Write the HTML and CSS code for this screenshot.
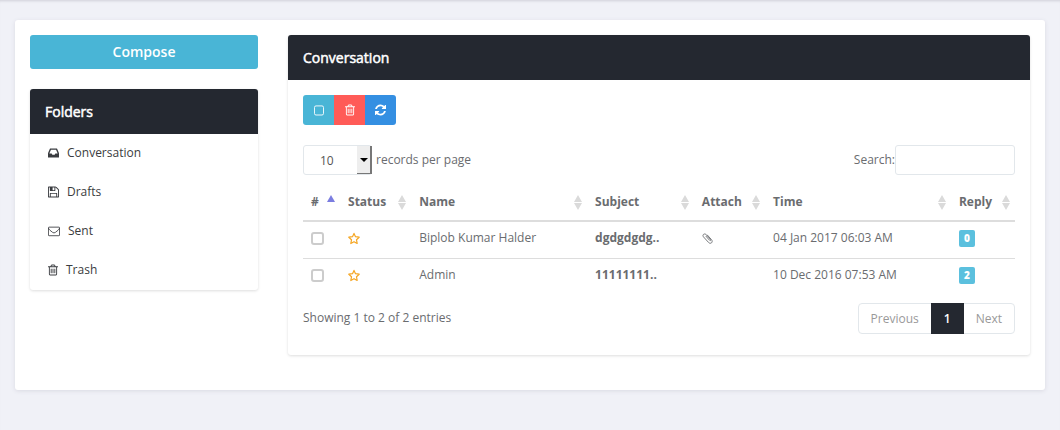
FILE: index.html
```
<!DOCTYPE html>
<html lang="en">
<head>
<meta charset="utf-8">
<meta name="viewport" content="width=device-width, initial-scale=1">
<title>Conversation</title>
<link rel="stylesheet" href="styles.css">
</head>
<body>
<svg class="sprite" aria-hidden="true">
  <symbol id="inbox" viewBox="0 0 1536 1792"><path d="M1023 960h316q-1-3-2.500-8t-2.500-8l-212-496H414L202 944q-1 2-2.500 8t-2.500 8h316l95 192h320zm513 30v482q0 26-19 45t-45 19H64q-26 0-45-19T0 1472V990q0-62 25-123l238-552q10-25 36.500-42t52.500-17h832q26 0 52.500 17t36.500 42l238 552q25 61 25 123z"/></symbol>
  <symbol id="floppy" viewBox="0 -128 1536 1792"><path d="M384 1408h768v-384H384v384zm896 0h128V512q0-14-10-38.500t-20-34.500l-281-281q-10-10-34-20t-39-10v416q0 40-28 68t-68 28H352q-40 0-68-28t-28-68V128H128v1280h128V992q0-40 28-68t68-28h832q40 0 68 28t28 68v416zM896 480V160q0-13-9.500-22.500T864 128H672q-13 0-22.500 9.500T640 160v320q0 13 9.500 22.500T672 512h192q13 0 22.500-9.500T896 480zm640 32v928q0 40-28 68t-68 28H96q-40 0-68-28t-28-68V96q0-40 28-68T96 0h928q40 0 88 20t76 48l280 280q28 28 48 76t20 88z"/></symbol>
  <symbol id="envelope" viewBox="0 0 1792 1792"><path fill="none" stroke="currentColor" stroke-width="128" d="M160 320h1472q96 0 96 96v1088q0 96-96 96H160q-96 0-96-96V416q0-96 96-96zM64 440q20 180 200 320l420 340q212 170 424 0l420-340q180-140 200-320"/></symbol>
  <symbol id="trash" viewBox="0 -128 1408 1792"><path d="M512 608v576q0 14-9 23t-23 9h-64q-14 0-23-9t-9-23V608q0-14 9-23t23-9h64q14 0 23 9t9 23zm256 0v576q0 14-9 23t-23 9h-64q-14 0-23-9t-9-23V608q0-14 9-23t23-9h64q14 0 23 9t9 23zm256 0v576q0 14-9 23t-23 9h-64q-14 0-23-9t-9-23V608q0-14 9-23t23-9h64q14 0 23 9t9 23zm128 724V384H256v948q0 22 7 40.500t14.500 27 10.500 8.500h832q3 0 10.500-8.500t14.500-27 7-40.500zM480 256h448l-48-117q-7-9-17-11H546q-10 2-17 11zm928 32v64q0 14-9 23t-23 9h-96v948q0 83-47 143.500t-113 60.500H288q-66 0-113-58.500T128 1336V384H32q-14 0-23-9t-9-23v-64q0-14 9-23t23-9h309l70-167q15-37 54-63t79-26h320q40 0 79 26t54 63l70 167h309q14 0 23 9t9 23z"/></symbol>
  <symbol id="square" viewBox="0 0 1408 1792"><rect x="64" y="320" width="1280" height="1280" rx="220" fill="none" stroke="currentColor" stroke-width="128"/></symbol>
  <symbol id="refresh" viewBox="0 -128 1536 1792"><path d="M1511 928q0 5-1 7-64 268-268 434.500T764 1536q-146 0-282.500-55T238 1324l-129 129q-19 19-45 19t-45-19-19-45V960q0-26 19-45t45-19h448q26 0 45 19t19 45-19 45l-137 137q71 66 161 102t187 36q134 0 250-65t186-179q11-17 53-117 8-23 30-23h192q13 0 22.500 9.500t9.500 22.500zm25-800v448q0 26-19 45t-45 19h-448q-26 0-45-19t-19-45 19-45l138-138Q969 256 768 256q-134 0-250 65T332 500q-11 17-53 117-8 23-30 23H50q-13 0-22.500-9.500T18 608v-7q65-268 270-434.500T768 0q146 0 284 55.500T1297 212l130-129q19-19 45-19t45 19 19 45z"/></symbol>
  <symbol id="star" viewBox="0 0 12 13"><path fill="none" stroke="currentColor" stroke-width="1.200" stroke-linejoin="round" d="M6 1.400 7.500 4.700 11.200 5.200 8.500 7.800 9.200 11.500 6 9.700 2.800 11.500 3.500 7.800 .8 5.200 4.500 4.700z"/></symbol>
  <symbol id="clip" viewBox="0 0 12 13"><path fill="none" stroke="currentColor" stroke-width=".9" stroke-linecap="round" d="M4 4.300 7.500 8.200C8.300 9.100 9.200 8.200 8.500 7.400L4.200 2.700C2.300.8-.2 3 1.600 5L6.500 10.400C8.700 12.700 11.500 10 9.500 7.700L5.300 3"/></symbol>
  <symbol id="sort" viewBox="0 0 8 15"><path d="M4 0 8 7H0zM0 8h8l-4 7z"/></symbol>
  <symbol id="asc" viewBox="0 0 8 15"><path d="M4 0 8 7H0z"/></symbol>
</svg>
<main class="page">
  <div class="card">
    <aside class="sidebar">
      <button class="compose" type="button">Compose</button>
      <nav class="panel" aria-labelledby="folders">
        <h2 class="panel-title" id="folders">Folders</h2>
        <ul class="folders">
          <li><a class="folder" href="#"><svg class="icon icon-12"><use href="#inbox"/></svg>Conversation</a></li>
          <li><a class="folder" href="#"><svg class="icon icon-12"><use href="#floppy"/></svg>Drafts</a></li>
          <li><a class="folder" href="#"><svg class="icon icon-13"><use href="#envelope"/></svg>Sent</a></li>
          <li><a class="folder" href="#"><svg class="icon icon-10"><use href="#trash"/></svg>Trash</a></li>
        </ul>
      </nav>
    </aside>
    <section class="panel content">
      <h2 class="panel-title">Conversation</h2>
      <div class="panel-body">
        <div class="tools">
          <button class="tool tool-check" type="button" aria-label="Select all"><svg class="icon icon-10"><use href="#square"/></svg></button>
          <button class="tool tool-delete" type="button" aria-label="Delete"><svg class="icon icon-10"><use href="#trash"/></svg></button>
          <button class="tool tool-refresh" type="button" aria-label="Refresh"><svg class="icon icon-12"><use href="#refresh"/></svg></button>
        </div>
        <div class="filters">
          <label class="length"><span class="select-box"><select class="select"><option>10</option><option>25</option><option>50</option></select><span class="select-arrow"></span></span>records per page</label>
          <label class="search">Search:<input class="search-input" type="text"></label>
        </div>
        <table class="table">
          <colgroup><col class="c-check"><col class="c-status"><col class="c-name"><col class="c-subject"><col class="c-attach"><col class="c-time"><col class="c-reply"></colgroup>
          <thead>
            <tr>
              <th><span class="head">#<svg class="sort sorted"><use href="#asc"/></svg></span></th>
              <th><span class="head">Status<svg class="sort"><use href="#sort"/></svg></span></th>
              <th><span class="head">Name<svg class="sort"><use href="#sort"/></svg></span></th>
              <th><span class="head">Subject<svg class="sort"><use href="#sort"/></svg></span></th>
              <th><span class="head">Attach<svg class="sort"><use href="#sort"/></svg></span></th>
              <th><span class="head">Time<svg class="sort"><use href="#sort"/></svg></span></th>
              <th><span class="head">Reply<svg class="sort"><use href="#sort"/></svg></span></th>
            </tr>
          </thead>
          <tbody>
            <tr>
              <td><input class="check" type="checkbox" aria-label="Select Biplob Kumar Halder"></td>
              <td><svg class="star"><use href="#star"/></svg></td>
              <td>Biplob Kumar Halder</td>
              <td><b>dgdgdgdg..</b></td>
              <td><svg class="clip"><use href="#clip"/></svg></td>
              <td>04 Jan 2017 06:03 AM</td>
              <td><span class="badge">0</span></td>
            </tr>
            <tr>
              <td><input class="check" type="checkbox" aria-label="Select Admin"></td>
              <td><svg class="star"><use href="#star"/></svg></td>
              <td>Admin</td>
              <td><b>11111111..</b></td>
              <td></td>
              <td>10 Dec 2016 07:53 AM</td>
              <td><span class="badge">2</span></td>
            </tr>
          </tbody>
        </table>
        <div class="footer">
          <span>Showing 1 to 2 of 2 entries</span>
          <nav class="pages" aria-label="Pages">
            <a class="page-link" href="#">Previous</a>
            <a class="page-link current" href="#">1</a>
            <a class="page-link" href="#">Next</a>
          </nav>
        </div>
      </div>
    </section>
  </div>
</main>
</body>
</html>
```
FILE: styles.css
```
* { box-sizing: border-box; }
body {
  margin: 0;
  background: #f0f1f7;
  color: #6a6c6f;
  font: 12px/18px "Open Sans", "Noto Sans", sans-serif;
}
button, input, select { font: inherit; color: inherit; }
.sprite { position: absolute; width: 0; height: 0; }
.icon, .star, .clip, .sort { display: block; flex: none; fill: currentColor; }
.icon { height: 14px; }
.icon-10 { width: 10px; }
.icon-12 { width: 11px; }
.icon-13 { width: 12px; }

.page { padding: 20px 15px 40px; box-shadow: inset 0 3px 3px -2px #cfd0d8; }
.card {
  display: flex;
  align-items: flex-start;
  gap: 30px;
  padding: 15px 15px 35px;
  border-radius: 3px;
  background: #fff;
  box-shadow: 0 1px 4px #d9dae2;
}
.sidebar { flex: 0 0 228px; }
.compose {
  display: block;
  width: 100%;
  height: 34px;
  margin: 0 0 20px;
  padding: 0;
  border: 0;
  border-radius: 3px;
  background: #49b5d6;
  color: #fff;
  font-size: 14px;
  font-weight: 600;
}
.panel { border-radius: 3px; background: #fff; box-shadow: 0 1px 3px #dedede; }
.panel-title {
  margin: 0;
  padding: 13px 15px 12px;
  border-radius: 3px 3px 0 0;
  background: #242830;
  color: #fff;
  font-size: 14px;
  line-height: 20px;
  font-weight: 400;
  -webkit-text-stroke: 0.5px #fff;
}
.folders { margin: 0; padding: 0; list-style: none; }
.folder {
  display: flex;
  align-items: center;
  gap: 8px;
  height: 39px;
  padding: 0 18px 2px;
  color: #3a3c40;
  text-decoration: none;
}
.content { flex: 1; min-width: 0; }
.panel-body { padding: 15px 15px 21px; }

.tools { display: flex; }
.tool {
  display: flex;
  align-items: center;
  justify-content: center;
  width: 31px;
  height: 30px;
  padding: 0;
  border: 0;
  color: #fff;
}
.tool-check { border-radius: 3px 0 0 3px; background: #49b5d6; }
.tool-delete { background: #ff5b57; }
.tool-refresh { border-radius: 0 3px 3px 0; background: #348fe2; }

.filters { display: flex; justify-content: space-between; margin: 20px 0 9px; }
.length, .search { display: flex; align-items: center; }
.length { gap: 4px; }
.select-box { position: relative; }
.select {
  display: block;
  appearance: none;
  width: 69px;
  height: 30px;
  padding: 2px 16px 0;
  border: 1px solid #e2e7eb;
  border-radius: 3px;
  background: #fff;
  color: #555;
}
.select-arrow {
  position: absolute;
  top: 1px;
  right: 0;
  bottom: 1px;
  width: 15px;
  display: flex;
  align-items: center;
  justify-content: center;
  border-right: 2px solid #777;
  border-bottom: 1px solid #777;
  background: #eee;
  pointer-events: none;
}
.select-arrow::before {
  content: "";
  border: 4px solid transparent;
  border-top: 4px solid #000;
  border-bottom: 0;
}
.search-input {
  width: 120px;
  height: 30px;
  padding: 0 8px;
  border: 1px solid #e2e7eb;
  border-radius: 3px;
  background: #fff;
}

.table { width: 100%; table-layout: fixed; border-collapse: collapse; }
.c-check { width: 5.2%; }
.c-status { width: 10%; }
.c-name { width: 24.7%; }
.c-subject { width: 15%; }
.c-attach { width: 10%; }
.c-time { width: 26.1%; }
.c-reply { width: 9%; }
th, td { padding: 0 8px; text-align: left; white-space: nowrap; }
th { height: 37px; padding-right: 5px; border-bottom: 2px solid #ddd; font-weight: 700; }
td { height: 37px; padding-bottom: 3px; border-bottom: 1px solid #ddd; }
tbody tr:last-child td { border-bottom: 0; }
.head { display: flex; align-items: center; justify-content: space-between; }
.sort { width: 8px; height: 15px; color: #dadada; }
.sorted { color: #7b7de0; }
b { font-weight: 700; }
.check {
  display: block;
  appearance: none;
  width: 13px;
  height: 13px;
  margin: 0;
  border: 2px solid #ccc;
  border-radius: 3px;
  background: #fff;
}
.star { width: 12px; height: 13px; color: #f5a623; }
.clip { width: 12px; height: 13px; }
.badge {
  display: block;
  width: 16px;
  height: 17px;
  border-radius: 2px;
  background: #5bc0de;
  color: #fff;
  font-size: 10px;
  line-height: 17px;
  font-weight: 800;
  text-align: center;
}

.footer { display: flex; justify-content: space-between; align-items: flex-start; padding-top: 8px; }
.footer > span { padding-top: 6px; }
.pages { display: flex; border: 1px solid #e2e7eb; border-radius: 4px; }
.page-link { padding: 6px 12px; line-height: 17px; color: #999; text-decoration: none; }
.current { margin: -1px 0; padding: 7px 13px; background: #242830; color: #fff; font-weight: 600; }
```
